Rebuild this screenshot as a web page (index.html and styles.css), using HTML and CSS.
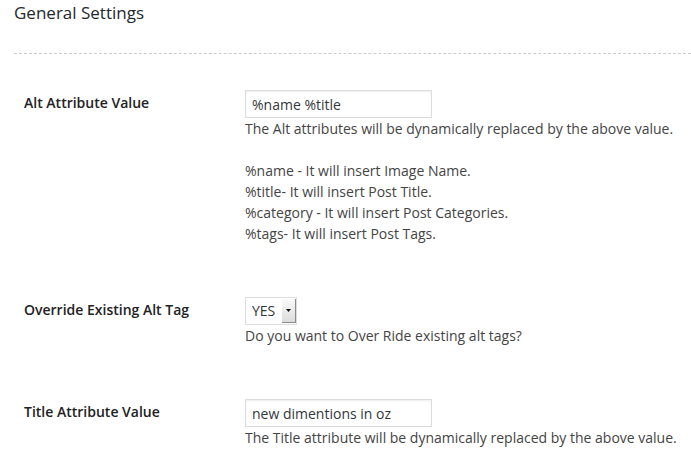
FILE: index.html
```html
<!DOCTYPE html>
<html>
<head>
<meta charset="utf-8">
<link rel="stylesheet" href="styles.css">
</head>
<body>
<div class="page">
  <h2 class="title">General Settings</h2>
  <div class="settings">
    <div class="row">
      <div class="label">Alt Attribute Value</div>
      <div class="field">
        <input class="text-input" type="text" value="%name %title">
        <p class="desc">The Alt attributes will be dynamically replaced by the above value.<br><br>%name - It will insert Image Name.<br>%title- It will insert Post Title.<br>%category - It will insert Post Categories.<br>%tags- It will insert Post Tags.</p>
      </div>
    </div>
    <div class="row">
      <div class="label">Override Existing Alt Tag</div>
      <div class="field">
        <div class="select">
          <span class="select-value">YES</span>
          <span class="select-btn">
            <svg width="5" height="3" viewBox="0 0 5 3"><path d="M0 0H5L2.5 3Z" fill="#111"/></svg>
          </span>
        </div>
        <p class="desc">Do you want to Over Ride existing alt tags?</p>
      </div>
    </div>
    <div class="row">
      <div class="label">Title Attribute Value</div>
      <div class="field">
        <input class="text-input" type="text" value="new dimentions in oz">
        <p class="desc">The Title attribute will be dynamically replaced by the above value.</p>
      </div>
    </div>
  </div>
</div>
</body>
</html>
```

FILE: styles.css
```css
html, body {
  margin: 0;
  padding: 0;
  background: #fff;
}
body {
  font-family: "Open Sans", "Liberation Sans", sans-serif;
  font-size: 14px;
  color: #444;
}
.page {
  padding-left: 14px;
}
.title {
  margin: 0;
  padding-top: 1px;
  font-size: 17px;
  line-height: 24px;
  font-weight: 400;
  color: #23282d;
}
.settings {
  margin-top: 28px;
  border-top: 1px dashed #ccc;
  padding-top: 36px;
  display: flex;
  flex-direction: column;
  gap: 53px;
}
.row {
  display: flex;
}
.label {
  width: 231px;
  padding-left: 10px;
  box-sizing: border-box;
  flex: none;
  font-weight: 600;
  color: #222;
  line-height: 21px;
  padding-top: 2px;
}
.field {
  display: flex;
  flex-direction: column;
  align-items: flex-start;
}
.text-input {
  width: 187px;
  height: 28px;
  box-sizing: border-box;
  margin: 0;
  border: 1px solid #ddd;
  box-shadow: inset 0 1px 2px rgba(0,0,0,0.07);
  padding: 0 6px;
  font-family: "Open Sans", "Liberation Sans", sans-serif;
  font-size: 14px;
  color: #32373c;
  background: #fff;
  outline: none;
}
.desc {
  margin: 0;
  line-height: 21px;
  color: #444;
}
.select {
  width: 52px;
  height: 28px;
  box-sizing: border-box;
  border: 1px solid #ddd;
  display: flex;
  align-items: stretch;
  background: #fff;
}
.select-value {
  flex: 1;
  padding-left: 6px;
  line-height: 26px;
  color: #32373c;
}
.select-btn {
  width: 14px;
  margin: 1px 0 1px 0;
  background: linear-gradient(#fafafa, #dcdcdc);
  border-right: 1px solid #8a8a8a;
  border-bottom: 1px solid #8a8a8a;
  display: flex;
  align-items: center;
  justify-content: center;
  box-sizing: border-box;
}
```
